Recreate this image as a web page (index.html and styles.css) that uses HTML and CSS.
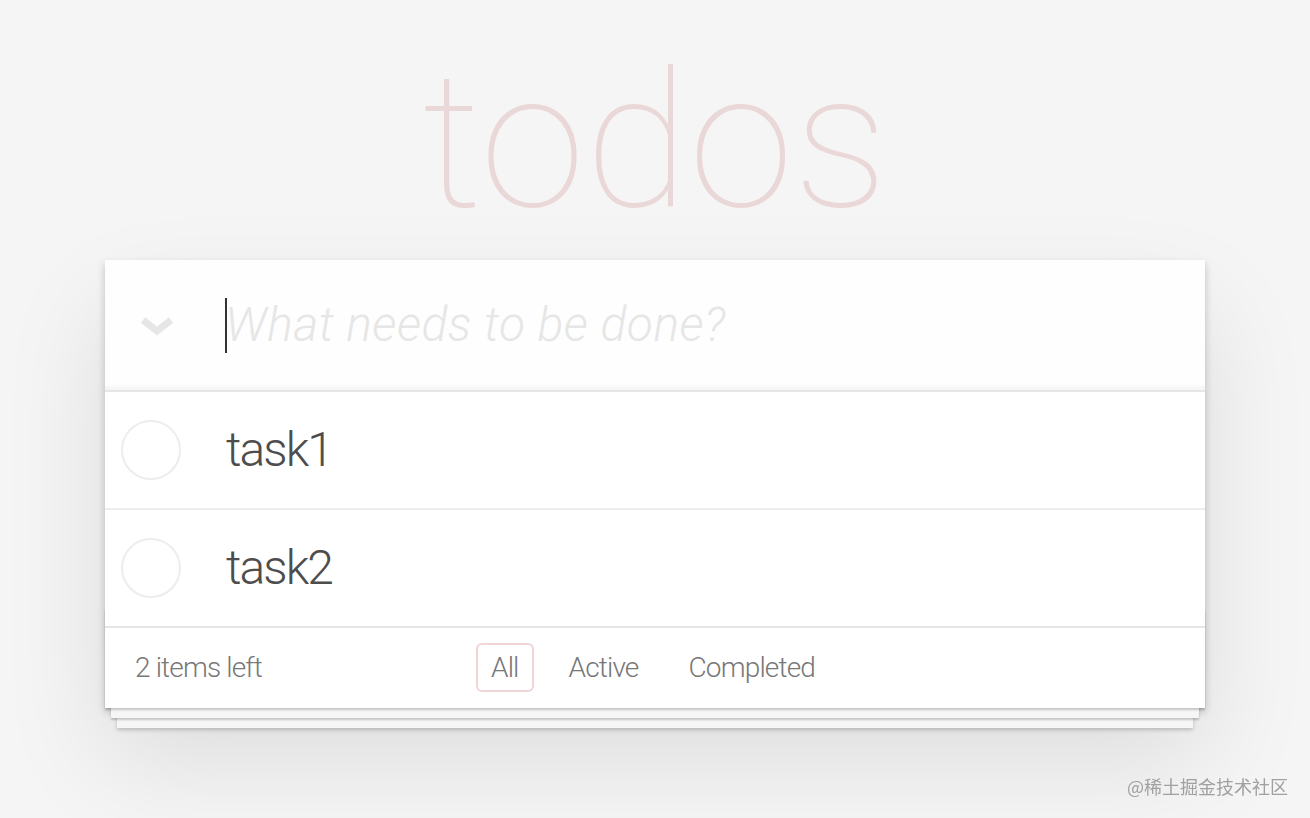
FILE: index.html
```html
<!doctype html>
<html lang="en">
<head>
<meta charset="utf-8">
<title>Todos</title>
<link rel="stylesheet" href="styles.css">
</head>
<body>

<section class="todoapp">
	<header class="header">
		<h1>todos</h1>
		<input class="new-todo" placeholder="What needs to be done?">
		<span class="caret"></span>
	</header>

	<section class="main">
		<label class="toggle-all">
			<svg width="36" height="22" viewBox="0 0 36 22"><polyline points="4,5 18,16 32,5" fill="none" stroke="#e6e6e6" stroke-width="7"/></svg>
		</label>
		<ul class="todo-list">
			<li>
				<span class="toggle"></span>
				<label>task1</label>
			</li>
			<li>
				<span class="toggle"></span>
				<label>task2</label>
			</li>
		</ul>
	</section>

	<footer class="footer">
		<span class="todo-count">2 items left</span>
		<ul class="filters">
			<li><a href="#/" class="selected">All</a></li>
			<li><a href="#/active">Active</a></li>
			<li><a href="#/completed">Completed</a></li>
		</ul>
		<span></span>
	</footer>
</section>

<div class="watermark">@稀土掘金技术社区</div>

</body>
</html>
```

FILE: styles.css
```css
html,body {
	margin: 0;
	padding: 0;
	background: #f5f5f5;
}
body {
	display: flow-root;
	box-sizing: border-box;
	min-height: 818px;
	font-family: "Helvetica Neue", Roboto, "Liberation Sans", sans-serif;
	font-size: 28px;
	line-height: 39.2px;
	font-weight: 300;
	letter-spacing: -0.03em;
	color: #4d4d4d;
}
ul {
	margin: 0;
	padding: 0;
	list-style: none;
}

.todoapp {
	max-width: 1100px;
	background: #fff;
	margin: 260px auto 80px auto;
	position: relative;
	box-shadow: 0 4px 8px 0 rgba(0,0,0,0.2), 0 50px 100px 0 rgba(0,0,0,0.1);
}
.todoapp h1 {
	position: absolute;
	top: -252px;
	width: 100%;
	margin: 0;
	font-size: 190px;
	line-height: 1.4;
	font-weight: 100;
	letter-spacing: 0;
	text-align: center;
	color: rgba(175,47,47,0.15);
}

.header {
	position: relative;
}
.new-todo {
	display: block;
	box-sizing: border-box;
	width: 100%;
	margin: 0;
	padding: 32px 32px 32px 120px;
	border: none;
	outline: none;
	font-family: inherit;
	font-size: 48px;
	line-height: 66px;
	font-weight: 300;
	letter-spacing: 0.01em;
	color: inherit;
	background: rgba(0,0,0,0.003);
	box-shadow: inset 0 -4px 2px rgba(0,0,0,0.03);
}
.new-todo::placeholder {
	font-style: italic;
	font-weight: 300;
	color: #e6e6e6;
}
.caret {
	position: absolute;
	left: 120px;
	top: 38px;
	width: 2px;
	height: 55px;
	background: #333;
}

.main {
	position: relative;
	border-top: 2px solid #e6e6e6;
}
.toggle-all {
	position: absolute;
	top: -77px;
	left: 34px;
	width: 36px;
	height: 22px;
}
.toggle-all svg {
	display: block;
}

.todo-list li {
	display: flex;
	align-items: center;
	font-size: 48px;
	border-bottom: 2px solid #ededed;
}
.todo-list li:last-child {
	border-bottom: none;
}
.toggle {
	box-sizing: border-box;
	width: 60px;
	height: 60px;
	margin-left: 16px;
	border: 2px solid #ededed;
	border-radius: 50%;
	flex: none;
}
.todo-list label {
	padding: 30px 30px 30px 45px;
	line-height: 56px;
	letter-spacing: -0.04em;
	color: #4d4d4d;
}

.footer {
	display: grid;
	grid-template-columns: 1fr auto 1fr;
	align-items: center;
	position: relative;
	height: 40px;
	padding: 20px 30px;
	color: #777;
	border-top: 2px solid #e6e6e6;
}
.footer:before {
	content: '';
	position: absolute;
	right: 0;
	bottom: 0;
	left: 0;
	height: 100px;
	overflow: hidden;
	pointer-events: none;
	box-shadow: 0 2px 2px rgba(0,0,0,0.2),
	            0 16px 0 -6px #f6f6f6,
	            0 18px 2px -6px rgba(0,0,0,0.2),
	            0 32px 0 -12px #f6f6f6,
	            0 34px 4px -12px rgba(0,0,0,0.2);
}
.todo-count {
	text-align: left;
}
.filters {
	display: flex;
	transform: translateX(-2px);
}
.filters a {
	color: inherit;
	margin: 6px;
	padding: 6px 13px;
	text-decoration: none;
	border: 2px solid transparent;
	border-radius: 6px;
}
.filters li + li a {
	margin-left: 14px;
}
.filters a.selected {
	border-color: rgba(175,47,47,0.2);
}

.watermark {
	position: fixed;
	right: 22px;
	bottom: 20px;
	font-family: "Noto Sans CJK SC", sans-serif;
	font-size: 18px;
	line-height: 24px;
	font-weight: 400;
	letter-spacing: 0;
	color: #a0a0a0;
}
```
